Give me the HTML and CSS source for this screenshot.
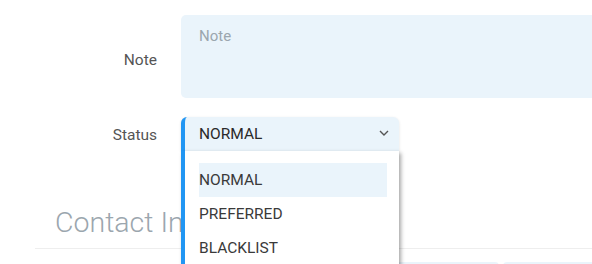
FILE: index.html
```html
<!doctype html>
<html lang="en">
<head>
    <meta charset="UTF-8">
    <title>Contact</title>
    <link rel="stylesheet" href="styles.css">
</head>
<body>
<div class="form">
    <div class="row row-note">
        <label class="label">Note</label>
        <div class="field textarea">Note</div>
    </div>
    <div class="row row-status">
        <label class="label">Status</label>
        <div class="select-wrap">
            <div class="select">
                <span>NORMAL</span>
                <svg class="chevron" width="10" height="6" viewBox="0 0 10 6">
                    <path d="M1 1 L5 5 L9 1" fill="none" stroke="#555" stroke-width="1.4"/>
                </svg>
            </div>
            <ul class="dropdown">
                <li class="option active">NORMAL</li>
                <li class="option">PREFERRED</li>
                <li class="option">BLACKLIST</li>
            </ul>
        </div>
    </div>
</div>
<div class="section">
    <h2 class="section-title">Contact Information</h2>
    <div class="boxes">
        <div class="box box-a"></div>
        <div class="box box-b"></div>
    </div>
</div>
</body>
</html>
```

FILE: styles.css
```css
body {
    margin: 0;
    font-family: Roboto, "Noto Sans", sans-serif;
    overflow: hidden;
    width: 592px;
    height: 264px;
}
.form {
    padding-top: 15px;
}
.row {
    display: grid;
    grid-template-columns: 157px 1fr;
    column-gap: 24px;
}
.row-status {
    margin-top: 19px;
}
.label {
    font-size: 15.5px;
    color: #555;
    text-align: right;
}
.row-note .label {
    padding-top: 36px;
}
.row-status .label {
    padding-top: 9px;
}
.textarea {
    width: 440px;
    height: 83px;
    background-color: #eaf4fb;
    border-radius: 5px;
    box-sizing: border-box;
    padding: 12px 18px;
    font-size: 15px;
    color: #9ba6ae;
}
.select-wrap {
    position: relative;
    width: 218px;
}
.select {
    height: 34px;
    box-sizing: border-box;
    background-color: #eaf4fb;
    border-left: 4px solid #2196f3;
    border-radius: 6px 6px 0 0;
    display: flex;
    align-items: center;
    justify-content: space-between;
    padding: 0 10px 0 14px;
    font-size: 15.5px;
    color: #2a2a2a;
    box-shadow: 0 1px 3px rgba(0, 0, 0, 0.12);
}
.chevron {
    margin-top: -3px;
}
.dropdown {
    position: absolute;
    top: 34px;
    left: 0;
    width: 218px;
    box-sizing: border-box;
    margin: 0;
    padding: 12px 12px 20px 14px;
    list-style: none;
    background-color: #fff;
    border-left: 4px solid #2196f3;
    box-shadow: 2px 2px 4px rgba(0, 0, 0, 0.35);
    z-index: 2;
}
.option {
    height: 34px;
    line-height: 34px;
    font-size: 15.5px;
    color: #3a3a3a;
}
.option.active {
    background-color: #eaf4fb;
}
.section {
    padding: 0 0 0 35px;
}
.section-title {
    margin: 55px 0 0;
    padding: 0 0 9px 20px;
    font-size: 28.5px;
    font-weight: 300;
    color: #9ba6ae;
    white-space: nowrap;
    border-bottom: 1px solid #eee;
}
.boxes {
    display: flex;
    gap: 4px;
    margin-top: 13px;
    margin-left: 146px;
}
.box {
    flex-shrink: 0;
    height: 30px;
    background-color: #eaf4fb;
    border-radius: 4px;
}
.box-a {
    width: 318px;
}
.box-b {
    width: 200px;
}
```
